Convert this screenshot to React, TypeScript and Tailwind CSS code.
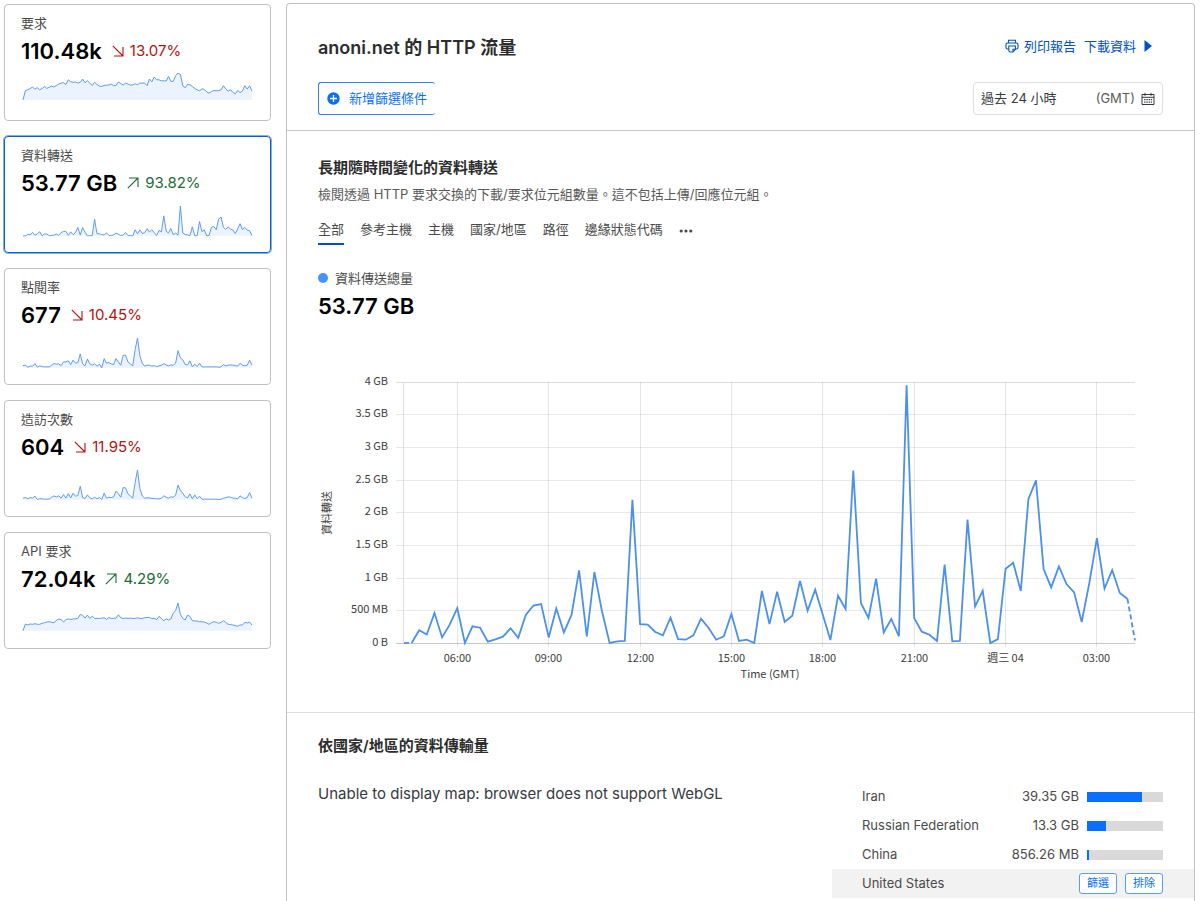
import { clsx } from 'clsx';

interface Metric {
  label: string;
  value: string;
  change: string;
  trend: 'up' | 'down';
  series: number[];
  // y of the zero line and height of the tallest sample inside the sparkline
  base: number;
  peak: number;
  selected?: boolean;
}

// MB transferred, one sample every 15 minutes
const transferSeries = [
  0, 0, 195, 130, 460, 85, 280, 535, 0, 255, 235, 20, 56, 97, 225, 80, 430, 575, 597, 85, 530, 163, 430, 1112,
  100, 1087, 485, 0, 25, 30, 2195, 290, 280, 168, 117, 388, 60, 50, 117, 372, 230, 50, 102, 444, 30, 50, 0, 796,
  290, 786, 321, 418, 949, 495, 816, 434, 45, 724, 520, 2640, 612, 383, 985, 163, 367, 102, 3945, 378, 173, 127,
  30, 1199, 25, 30, 1888, 561, 800, 0, 60, 1138, 1230, 796, 2204, 2490, 1133, 852, 1173, 903, 775, 321, 918,
  1607, 832, 1117, 765, 678, 40,
];

const requestSeries = [
  0, 28, 30, 34, 38, 32, 36, 30, 34, 40, 34, 38, 41, 38, 43, 47, 50, 51, 46, 60, 54, 52, 53, 50, 52, 62, 51, 57,
  50, 43, 52, 46, 41, 40, 43, 44, 44, 47, 42, 43, 53, 49, 44, 50, 47, 44, 44, 48, 45, 50, 50, 50, 42, 62, 54, 68,
  60, 60, 57, 57, 56, 70, 55, 55, 72, 80, 76, 42, 36, 46, 45, 40, 34, 30, 27, 33, 31, 24, 20, 25, 28, 27, 28, 30,
  42, 33, 26, 30, 22, 18, 28, 22, 26, 42, 32, 42, 26,
];

const pageViewSeries = [
  7, 8, 2, 5, 5, 13, 2, 6, 4, 3, 3, 3, 8, 13, 11, 12, 7, 18, 18, 21, 10, 23, 14, 16, 42, 12, 6, 27, 12, 8, 12, 5,
  11, 0, 28, 14, 16, 12, 10, 28, 18, 8, 38, 38, 18, 12, 6, 55, 90, 36, 14, 5, 8, 8, 5, 7, 4, 6, 8, 13, 9, 6, 9, 8,
  14, 52, 30, 24, 10, 9, 21, 3, 11, 4, 14, 3, 3, 3, 3, 3, 3, 3, 2, 3, 10, 6, 8, 9, 8, 7, 5, 14, 8, 6, 8, 23, 8,
];

const visitSeries = [
  5, 7, 3, 7, 5, 11, 1, 4, 3, 2, 2, 2, 8, 12, 9, 12, 5, 16, 5, 19, 6, 20, 11, 13, 41, 7, 4, 15, 6, 3, 8, 3, 7, 1,
  20, 5, 8, 7, 9, 26, 18, 8, 37, 36, 18, 12, 5, 52, 90, 34, 12, 5, 6, 6, 4, 4, 3, 3, 5, 12, 8, 5, 9, 8, 14, 44, 28,
  20, 9, 6, 18, 3, 15, 4, 11, 2, 2, 2, 2, 2, 2, 2, 1, 2, 5, 7, 9, 8, 5, 5, 3, 12, 7, 4, 7, 22, 5,
];

const apiSeries = [
  0, 21, 18, 21, 20, 22, 20, 20, 23, 25, 27, 28, 26, 25, 32, 36, 34, 27, 35, 36, 35, 36, 37, 38, 50, 47, 39, 48,
  38, 45, 38, 38, 38, 39, 40, 35, 41, 38, 38, 39, 49, 40, 38, 39, 38, 39, 38, 38, 40, 38, 38, 40, 41, 41, 37, 38,
  34, 44, 38, 31, 37, 33, 36, 54, 62, 85, 50, 38, 33, 48, 44, 31, 30, 30, 28, 28, 27, 24, 20, 25, 28, 26, 23, 26,
  31, 26, 20, 19, 18, 16, 14, 18, 18, 26, 24, 27, 18,
];

const metrics: Metric[] = [
  { label: '要求', value: '110.48k', change: '13.07%', trend: 'down', series: requestSeries, base: 27, peak: 27 },
  { label: '資料轉送', value: '53.77 GB', change: '93.82%', trend: 'up', series: transferSeries, base: 31, peak: 30, selected: true },
  { label: '點閱率', value: '677', change: '10.45%', trend: 'down', series: pageViewSeries, base: 31, peak: 30 },
  { label: '造訪次數', value: '604', change: '11.95%', trend: 'down', series: visitSeries, base: 31, peak: 30 },
  { label: 'API 要求', value: '72.04k', change: '4.29%', trend: 'up', series: apiSeries, base: 30, peak: 28 },
];

const tabs = ['全部', '參考主機', '主機', '國家/地區', '路徑', '邊緣狀態代碼'];

const countries = [
  { name: 'Iran', value: '39.35 GB', percent: 73 },
  { name: 'Russian Federation', value: '13.3 GB', percent: 25 },
  { name: 'China', value: '856.26 MB', percent: 2 },
];

function TrendIcon({ trend }: { trend: 'up' | 'down' }) {
  return (
    <svg viewBox="0 0 12 12" className="h-3 w-3" fill="none" stroke="currentColor" strokeWidth="1.1" aria-hidden="true">
      {trend === 'up' ? <path d="M.8 11.2 11 1M2 1h9v9" /> : <path d="M.8.8 11 11M2 11h9V2" />}
    </svg>
  );
}

function Sparkline({ metric }: { metric: Metric }) {
  const { series, base, peak } = metric;
  const max = Math.max(...series);
  const points = series
    .map((v, i) => `${(2 + (i * 230) / 96).toFixed(1)},${(base - (v / max) * peak).toFixed(1)}`)
    .join(' ');

  return (
    <svg viewBox="0 0 234 32" className="block h-auto w-full" aria-hidden="true">
      <polygon points={`2,${base} ${points} 232,${base}`} fill="#eaf3ff" />
      <polyline points={points} fill="none" stroke="#5b9af5" strokeWidth="1" />
    </svg>
  );
}

function MetricCard({ metric }: { metric: Metric }) {
  return (
    <button
      type="button"
      aria-pressed={!!metric.selected}
      className={clsx(
        'flex h-[117px] flex-col rounded-[4px] border bg-white px-4 pt-2 text-left',
        metric.selected ? 'border-[#0a5fd8] outline outline-[#0a5fd8]/50' : 'border-[#c2c2c2]',
      )}
    >
      <span className="text-[13px] leading-5 text-[#4a4a4a]">{metric.label}</span>
      <span className="flex items-center gap-2.5">
        <span className="text-[22px] leading-9 font-semibold text-black">{metric.value}</span>
        <span
          className={clsx(
            'flex items-center gap-1.5 text-[15px]',
            metric.trend === 'up' ? 'text-[#1c6b36]' : 'text-[#b5120f]',
          )}
        >
          <TrendIcon trend={metric.trend} />
          {metric.change}
        </span>
      </span>
      <span className="mt-1 block w-full">
        <Sparkline metric={metric} />
      </span>
    </button>
  );
}

function PrintIcon() {
  return (
    <svg viewBox="0 0 14 14" className="h-3.5 w-3.5" fill="none" stroke="currentColor" strokeWidth="1.1" aria-hidden="true">
      <path d="M3.5 4V1.2h7V4" />
      <path d="M3.6 10H2.2Q1 9.6 1 8.4V5.6Q1 4 2.6 4h8.8Q13 4 13 5.6v2.8q0 1.2-1.2 1.6h-1.2" />
      <path d="M3.8 7h6.6v3.4L8 13H5.4q-1.6 0-1.6-1.6z" />
      <path d="M10.4 10.2H8V13" />
    </svg>
  );
}

function CalendarIcon() {
  return (
    <svg viewBox="0 0 14 14" className="h-3.5 w-3.5" fill="none" stroke="currentColor" aria-hidden="true">
      <path d="M1 2.5h12v10H1zM1 5.3h12M4 .8v3M10 .8v3" />
      <path d="M3.2 7.6h8M3.2 10.1h8" strokeWidth="1.3" strokeDasharray="1.3 .9" />
    </svg>
  );
}

function TransferChart() {
  const left = 86;
  const bottom = 273;
  const stepX = 731 / 96;
  const toX = (i: number) => left + i * stepX;
  const toY = (mb: number) => bottom - mb * 0.0653;
  const toPoints = (from: number, to: number) =>
    transferSeries
      .slice(from, to)
      .map((v, i) => `${toX(from + i).toFixed(1)},${toY(v).toFixed(1)}`)
      .join(' ');
  const yLabels = ['0 B', '500 MB', '1 GB', '1.5 GB', '2 GB', '2.5 GB', '3 GB', '3.5 GB', '4 GB'];
  const xLabels = ['06:00', '09:00', '12:00', '15:00', '18:00', '21:00', '週三 04', '03:00'];

  return (
    <svg
      viewBox="0 0 845 320"
      role="img"
      aria-label="資料轉送"
      className="block h-auto w-full fill-[#3d3d3d] font-['Noto_Sans_CJK_TC',sans-serif] text-[11px]"
    >
      {yLabels.map((label, i) => {
        const y = Math.round(toY(i * 500)) + 0.5;
        return (
          <g key={label}>
            <line x1="78" x2="817" y1={y} y2={y} stroke={i === 0 ? '#c8c8c8' : i === 8 ? '#dcdcdc' : '#e8e8e8'} />
            <text x="70" y={y + 2.5} textAnchor="end">{label}</text>
          </g>
        );
      })}
      <line x1="85.5" x2="85.5" y1="12" y2="273" stroke="#dedede" />
      {xLabels.map((label, i) => {
        const x = Math.floor(toX(7 + i * 12)) + 0.5;
        return (
          <g key={label}>
            <line x1={x} x2={x} y1="12" y2="277" stroke="#000" strokeOpacity=".1" />
            <text x={x} y="292" textAnchor="middle">{label}</text>
          </g>
        );
      })}
      <text x="452" y="308" textAnchor="middle">Time (GMT)</text>
      <text transform="translate(13 143) rotate(-90)" textAnchor="middle">資料轉送</text>
      <g fill="none" stroke="#4a90ee" strokeWidth="1.8">
        <polyline points={toPoints(0, 2)} strokeDasharray="5 3" />
        <polyline points={toPoints(1, 96)} />
        <polyline points={toPoints(95, 97)} strokeDasharray="5 3" />
      </g>
    </svg>
  );
}

function CountryTable() {
  return (
    <table className="w-[362px] shrink-0 text-[13px] text-[#4a4a4a]">
      <tbody>
        {countries.map(({ name, value, percent }) => (
          <tr key={name} className="h-[29px]">
            <th scope="row" className="pl-[30px] text-left font-normal">{name}</th>
            <td className="text-right">{value}</td>
            <td className="w-[115px] pr-[31px] pl-2">
              <div className="h-2.5 bg-[#d9d9d9]">
                <div className="h-full bg-[#086fff]" style={{ width: `${percent}%` }} />
              </div>
            </td>
          </tr>
        ))}
        <tr className="h-[29px] bg-[#f2f2f2]">
          <th scope="row" className="pl-[30px] text-left font-normal">United States</th>
          <td colSpan={2} className="pr-[31px]">
            <div className="flex justify-end gap-2 text-[11px] text-[#086fff]">
              <button type="button" className="h-[21px] rounded-[3px] border border-[#5b9af5] bg-white px-[7px]">篩選</button>
              <button type="button" className="h-[21px] rounded-[3px] border border-[#5b9af5] bg-white px-[7px]">排除</button>
            </div>
          </td>
        </tr>
      </tbody>
    </table>
  );
}

export default function App() {
  return (
    <div className="flex min-h-screen gap-[15px] bg-white pr-[5px] pl-1 font-['Inter','Noto_Sans_CJK_TC',sans-serif] text-[#36393f]">
      <aside className="flex w-[267px] shrink-0 flex-col gap-[15px] pt-1">
        {metrics.map((metric) => (
          <MetricCard key={metric.label} metric={metric} />
        ))}
      </aside>

      <main className="mt-[3px] min-w-0 flex-1 rounded-t-[4px] border border-b-0 border-[#c2c2c2]">
        <header className="border-b border-[#c8c8c8] px-[31px] pt-[29px] pb-[15px]">
          <div className="flex items-start justify-between">
            <h1 className="text-[18px] leading-[30px] font-semibold text-[#2c2c2c]">anoni.net 的 HTTP 流量</h1>
            <div className="flex items-center gap-2 pr-[11px] text-[13px] leading-[26px] text-[#0051c3]">
              <a href="#print" className="flex items-center gap-[5px]">
                <PrintIcon />
                列印報告
              </a>
              <a href="#download" className="flex items-center gap-2">
                下載資料
                <svg viewBox="0 0 8 12" className="h-3 w-2 fill-current" aria-hidden="true">
                  <path d="M.5 0 8 6 .5 12z" />
                </svg>
              </a>
            </div>
          </div>
          <div className="mt-[19px] flex items-center justify-between">
            <button
              type="button"
              className="flex h-[33px] items-center gap-[9px] rounded-[3px] border border-r-0 border-[#2f7ff0] px-2 text-[13px] text-[#086fff]"
            >
              <svg viewBox="0 0 13 13" className="h-[13px] w-[13px]" aria-hidden="true">
                <circle cx="6.5" cy="6.5" r="6.2" fill="currentColor" />
                <path d="M6.5 3v7M3 6.5h7" stroke="#fff" strokeWidth="1.3" />
              </svg>
              新增篩選條件
            </button>
            <button
              type="button"
              className="flex h-[33px] w-[190px] items-center rounded-[4px] border border-[#dedede] px-[7px] text-[13px] text-[#36393f]"
            >
              過去 24 小時
              <span className="mr-1.5 ml-auto text-[#5c5c5c]">(GMT)</span>
              <CalendarIcon />
            </button>
          </div>
        </header>

        <section className="border-b border-[#dedede] px-[31px] pt-[25px] pb-[22px]">
          <h2 className="text-[15px] leading-6 font-semibold text-[#2c2c2c]">長期隨時間變化的資料轉送</h2>
          <p className="mt-1 text-[13px] leading-5 text-[#595959]">
            檢閱透過 HTTP 要求交換的下載/要求位元組數量。這不包括上傳/回應位元組。
          </p>
          <nav className="mt-[15px] flex gap-4 text-[13px] leading-5 text-[#4a4a4a]">
            {tabs.map((tab, i) => (
              <button
                key={tab}
                type="button"
                className={clsx('border-b-2 pb-1', i === 0 ? 'border-[#0051c3]' : 'border-transparent')}
              >
                {tab}
              </button>
            ))}
            <button type="button" aria-label="更多" className="border-b-2 border-transparent">
              <svg viewBox="0 0 14 4" className="h-1 w-3.5 fill-current" aria-hidden="true">
                <circle cx="2.2" cy="2" r="1.6" />
                <circle cx="7" cy="2" r="1.6" />
                <circle cx="11.8" cy="2" r="1.6" />
              </svg>
            </button>
          </nav>
          <div className="mt-[23px] flex items-center gap-[7px] text-[13px] leading-5 text-[#4a4a4a]">
            <span className="h-2.5 w-2.5 rounded-full bg-[#4693ff]" />
            資料傳送總量
          </div>
          <div className="text-[22px] leading-9 font-semibold text-black">53.77 GB</div>
          <div className="mt-[46px]">
            <TransferChart />
          </div>
        </section>

        <section className="pt-[21px] pl-[31px]">
          <h2 className="text-[15px] leading-6 font-semibold text-[#2c2c2c]">依國家/地區的資料傳輸量</h2>
          <div className="mt-6 flex justify-between">
            <p className="text-[15px] leading-6">Unable to display map: browser does not support WebGL</p>
            <CountryTable />
          </div>
        </section>
      </main>
    </div>
  );
}
